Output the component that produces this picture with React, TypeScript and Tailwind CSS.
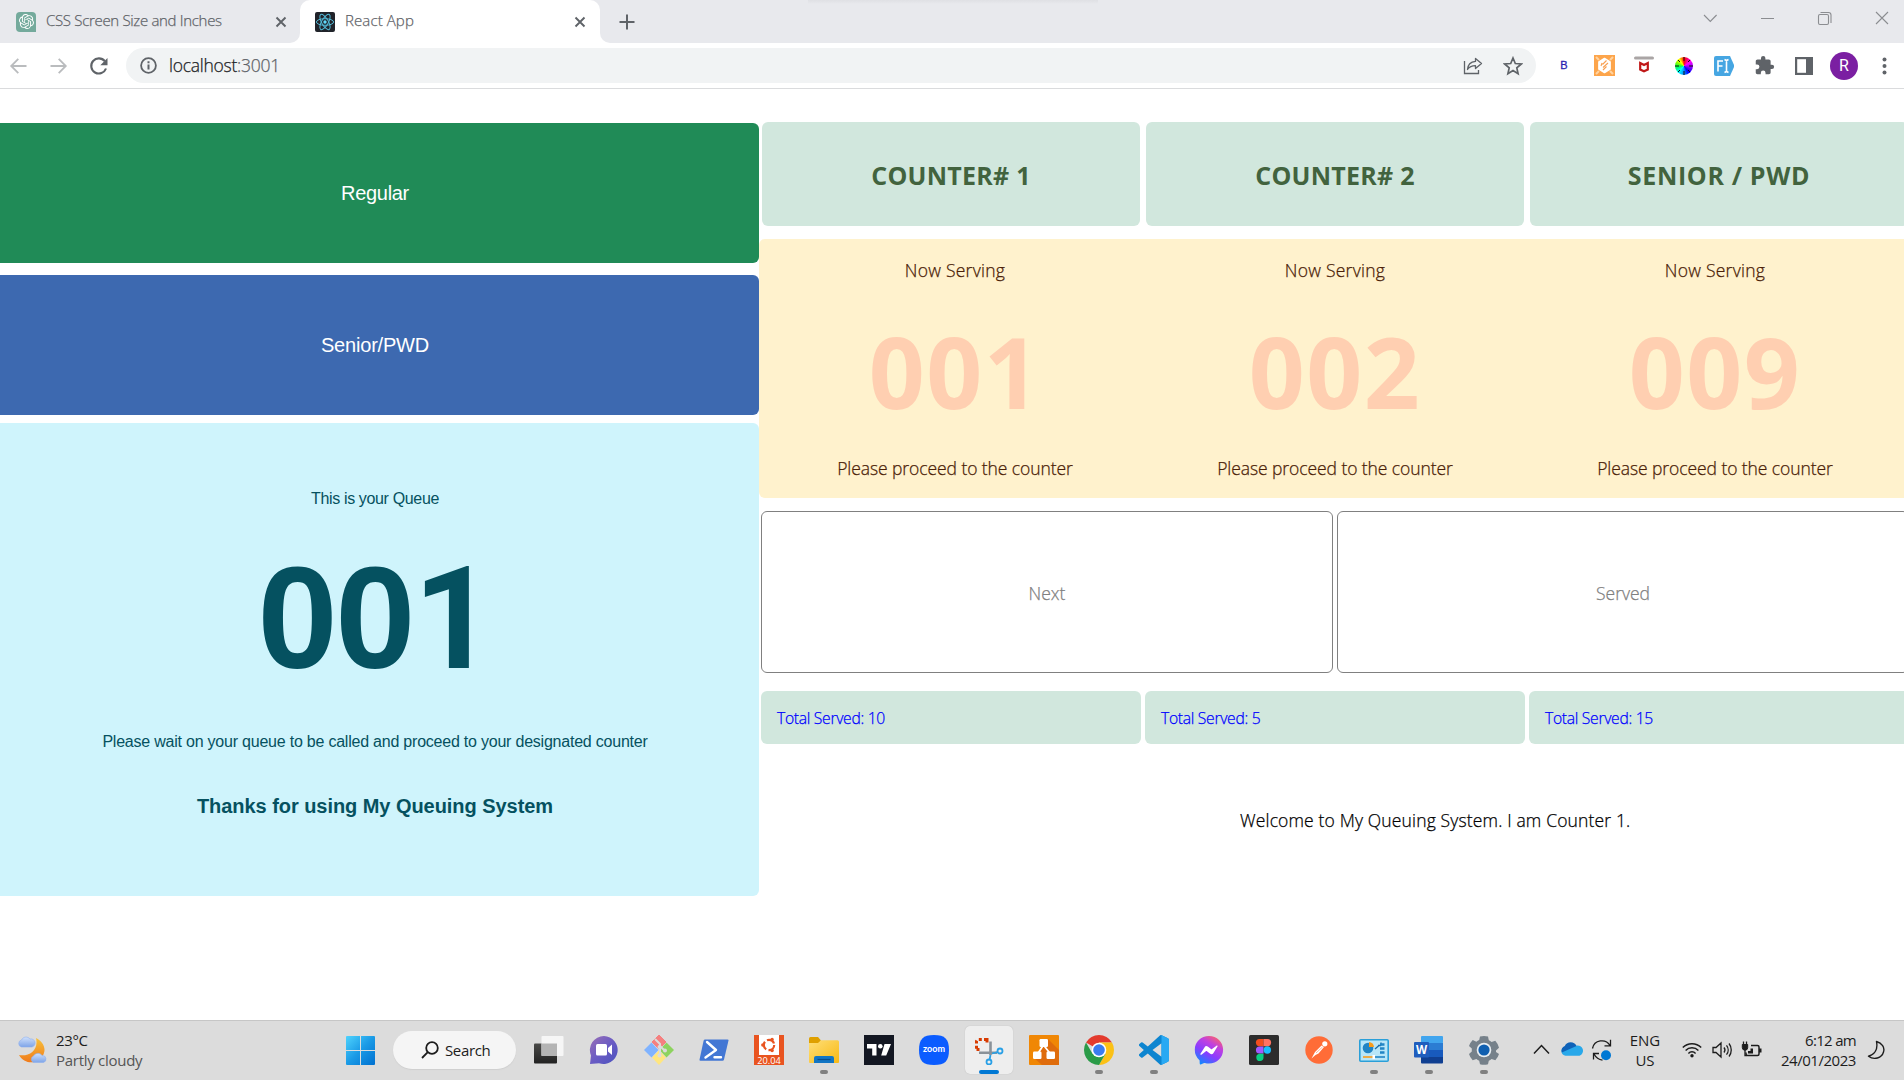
import React from "react";
import { SiOpenai } from "react-icons/si";

type Kids = { children?: React.ReactNode };

const sans = "font-['Open_Sans','Noto_Sans',sans-serif]";
const thin = "font-light [-webkit-text-stroke:0.25px_currentColor]";

/* ---------- Browser chrome ---------- */

function CloseX() {
  return (
    <svg width="12" height="12" viewBox="0 0 12 12" stroke="#5f6368" strokeWidth="1.9">
      <path d="M1.5 1.5l9 9M10.5 1.5l-9 9" />
    </svg>
  );
}

function ReactFavicon() {
  return (
    <svg width="20" height="20" viewBox="0 0 20 20">
      <rect width="20" height="20" rx="2" fill="#20232a" />
      <g fill="none" stroke="#53b9d6" strokeWidth="1">
        <ellipse cx="10" cy="10" rx="8.6" ry="3.3" />
        <ellipse cx="10" cy="10" rx="8.6" ry="3.3" transform="rotate(60 10 10)" />
        <ellipse cx="10" cy="10" rx="8.6" ry="3.3" transform="rotate(120 10 10)" />
      </g>
      <circle cx="10" cy="10" r="1.7" fill="#61dafb" />
    </svg>
  );
}

function TabStrip() {
  return (
    <div className="relative flex h-[43px] items-stretch bg-[#e8e9ed]">
      <div className="absolute left-[808px] top-0 h-[4px] w-[290px] bg-gradient-to-b from-[#dfe0e4] to-[#e8e9ed]" />
      <div className="flex w-[300px] items-center pl-4 pr-[13px]">
        <span className="grid h-5 w-5 place-items-center rounded-[4px] rounded-br-none bg-[#74aa9c] text-white">
          <SiOpenai size={15} />
        </span>
        <span className={`ml-[10px] flex-1 whitespace-nowrap pb-[2px] text-[15px] tracking-[-0.32px] text-[#5f6368] ${thin}`}>
          CSS Screen Size and Inches
        </span>
        <CloseX />
      </div>
      <div className="relative flex w-[300px] items-center rounded-t-[10px] bg-white pl-[15px] pr-[14px]">
        <div className="absolute -left-[10px] bottom-0 h-[10px] w-[10px] bg-white">
          <div className="h-full w-full rounded-br-[10px] bg-[#e8e9ed]" />
        </div>
        <div className="absolute -right-[10px] bottom-0 h-[10px] w-[10px] bg-white">
          <div className="h-full w-full rounded-bl-[10px] bg-[#e8e9ed]" />
        </div>
        <ReactFavicon />
        <span className={`ml-[10px] flex-1 pb-[2px] text-[15px] tracking-[0.1px] text-[#5f6368] ${thin}`}>React App</span>
        <CloseX />
      </div>
      <div className="flex flex-1 items-center justify-between pl-[19px] pr-[15px]">
        <svg width="16" height="16" viewBox="0 0 16 16" stroke="#5f6368" strokeWidth="2">
          <path d="M8 .5v15M.5 8h15" />
        </svg>
        <svg className="-mt-[7px]" width="186" height="16" viewBox="0 0 186 16" fill="none" stroke="#8b8d91" strokeWidth="1.1">
          <path d="M1 5l6.3 6.5L13.6 5M58 8.5h13" />
          <rect x="115.500" y="4.500" width="10" height="10" rx="1.500" />
          <path d="M117.500 2.500h8a2.500 2.500 0 0 1 2.500 2.500v8" />
          <path d="M173 2l12 12M185 2l-12 12" />
        </svg>
      </div>
    </div>
  );
}

function Cell({ children }: Kids) {
  return <span className="grid w-10 place-items-center">{children}</span>;
}

function Toolbar() {
  return (
    <div className="flex h-[46px] items-center border-b border-[#dadbdd] bg-white">
      <svg className="shrink-0" width="126" height="44" viewBox="0 0 126 44" fill="none" strokeWidth="1.8">
        <g stroke="#babcbe">
          <path d="M26.500 22H11.500M18.300 14.800L11.200 22l7.100 7.200" />
          <path d="M50.500 22h15M58.700 14.800L65.800 22l-7.100 7.200" />
        </g>
        <path d="M104.800 17.200A7.600 7.600 0 1 0 106 24.500" stroke="#5f6368" strokeWidth="2.100" />
        <path d="M107.500 14v7.200h-7.200z" fill="#5f6368" />
      </svg>
      <div className="flex h-[35px] w-[1410px] items-center rounded-full bg-[#f1f3f4]">
        <svg className="ml-[14px]" width="17" height="17" viewBox="0 0 17 17" fill="none" stroke="#5f6368" strokeWidth="1.8">
          <circle cx="8.500" cy="8.500" r="7.400" />
          <path d="M8.500 7.500v5M8.500 4.200v2" strokeWidth="2" />
        </svg>
        <span className={`ml-[12px] flex-1 pb-[2px] text-[17.5px] leading-6 tracking-[-0.25px] text-[#5f6368] ${thin}`}>
          <span className="text-[#202124]">localhost</span>:3001
        </span>
        <span className="flex w-[73px] justify-between pr-[13px]">
          <svg width="20" height="20" viewBox="0 0 20 20" fill="none" stroke="#5f6368" strokeWidth="1.300">
            <path d="M1.500 5v12.500h14V14" />
            <path d="M12.500 2.500l6 5-6 5V9.700c-4 0-6.300 1.300-8 3.800.3-4.500 3-7.600 8-8.100z" strokeLinejoin="round" />
          </svg>
          <svg width="20" height="20" viewBox="0 0 20 20" fill="none" stroke="#5f6368" strokeWidth="1.700">
            <path d="M10 2l2.300 5.500 6 .5-4.500 3.900 1.300 5.800L10 14.600l-5.100 3.100 1.300-5.800L1.700 8l6-.5z" />
          </svg>
        </span>
      </div>
      <div className="ml-[8px] flex items-center">
        <Cell>
          <span className="font-['Liberation_Sans',sans-serif] text-[11px] text-[#2a1fb0] [-webkit-text-stroke:0.3px]">B</span>
        </Cell>
        <Cell>
          <svg width="21" height="21" viewBox="0 0 21 21">
            <rect width="21" height="21" fill="#fda54b" />
            <path d="M2 2l3 3M19 2l-3 3M2 19l3-3M19 19l-3-3" stroke="#ffd3a0" strokeWidth="2" />
            <path d="M10.500 3.500l5.600 3.300v7.400l-5.600 3.300L4.900 14.200V6.800z" fill="#fff" stroke="#fff" strokeWidth="1.500" strokeLinejoin="round" />
            <path d="M12.500 5.500l-4 4M14 8l-5 4.500M12.500 11.500L9 15M8 8l-1 3" stroke="#f9a052" strokeWidth="1.100" />
          </svg>
        </Cell>
        <Cell>
          <svg width="20" height="20" viewBox="0 0 20 20">
            <rect y="0.500" width="20" height="3" rx="1.500" fill="#aaa5a5" />
            <path d="M6.200 7l3.800 2 3.800-2v6.500L10 15.300l-3.800-1.800z" fill="none" stroke="#c01818" strokeWidth="2.200" />
          </svg>
        </Cell>
        <Cell>
          <span className="relative grid h-[18px] w-[18px] place-items-center rounded-full bg-[conic-gradient(#f00,#f0f_16%,#80f_28%,#00f_40%,#08f_50%,#0ff_62%,#0f4_74%,#8f0_82%,#ff0_90%,#f80_95%,#f00)]">
            <svg className="absolute" width="20" height="20" viewBox="0 0 20 20" stroke="#111" strokeWidth="1">
              <path d="M10 1v4M10 15v4M1 10h4M15 10h4M4 4l2 2M14 14l2 2M16 4l-2 2M4 16l2-2" />
            </svg>
          </span>
        </Cell>
        <Cell>
          <svg width="20" height="20" viewBox="0 0 20 20">
            <path d="M2 0h14l4 9v2l-4 9H2a2 2 0 0 1-2-2V2a2 2 0 0 1 2-2z" fill="#46a6e2" />
            <path d="M4 15.500V5h5M4 10h4.500M10.500 3.500l2 1 2-1M12.500 4.500v11M10.500 16.500l2-1 2 1" stroke="#fff" strokeWidth="1.600" fill="none" />
          </svg>
        </Cell>
        <Cell>
          <svg width="21" height="21" viewBox="0 0 24 24" fill="#5f6368">
            <path d="M20.500 11H19V7c0-1.100-.9-2-2-2h-4V3.500a2.500 2.500 0 0 0-5 0V5H4c-1.100 0-2 .9-2 2v3.800h1.500a2.700 2.700 0 0 1 0 5.400H2V20c0 1.100.9 2 2 2h3.800v-1.500a2.700 2.700 0 0 1 5.400 0V22H17c1.100 0 2-.9 2-2v-4h1.500a2.500 2.500 0 0 0 0-5z" />
          </svg>
        </Cell>
        <Cell>
          <svg width="18" height="18" viewBox="0 0 18 18">
            <rect x="1.100" y="1.100" width="15.800" height="15.800" fill="none" stroke="#5f6368" strokeWidth="2.200" />
            <rect x="11" y="1" width="6" height="16" fill="#5f6368" />
          </svg>
        </Cell>
        <Cell>
          <span className="grid h-7 w-7 place-items-center rounded-full bg-[#7b1fa2] font-[Roboto,sans-serif] text-[16px] leading-none text-white">R</span>
        </Cell>
        <Cell>
          <svg width="5" height="18" viewBox="0 0 5 18" fill="#5f6368">
            <circle cx="2.500" cy="2.500" r="2" />
            <circle cx="2.500" cy="9" r="2" />
            <circle cx="2.500" cy="15.500" r="2" />
          </svg>
        </Cell>
      </div>
    </div>
  );
}

/* ---------- Queue page ---------- */

const counters = [
  { title: "COUNTER# 1", now: "001", served: 10, tracking: "tracking-[0.25px]" },
  { title: "COUNTER# 2", now: "002", served: 5, tracking: "tracking-[0.25px]" },
  { title: "SENIOR / PWD", now: "009", served: 15, tracking: "tracking-[0.65px]" },
];

function KioskPanel() {
  return (
    <div className="-ml-[9px] mt-[34px] w-[768px] shrink-0 text-center font-['Liberation_Sans',Arial,sans-serif]">
      <button className="block h-[140px] w-full rounded-md bg-[#208b57] text-[20px] tracking-[-0.3px] text-white">Regular</button>
      <button className="mt-3 block h-[140px] w-full rounded-md bg-[#3d69b0] text-[20px] tracking-[-0.2px] text-white">Senior/PWD</button>
      <div className="mt-2 h-[473px] rounded-md bg-[#cff4fc] pt-16 text-[#055160]">
        <p className="text-[16px] leading-6 tracking-[-0.35px]">This is your Queue</p>
        <p className="mt-[24px] h-[169px] text-[144px] font-bold leading-[168px] tracking-[-2.2px]">
          00<span className="font-[Roboto,sans-serif] text-[142px]">1</span>
        </p>
        <p className="mt-[26px] text-[16px] leading-6 tracking-[-0.22px]">
          Please wait on your queue to be called and proceed to your designated counter
        </p>
        <p className="mt-[40px] text-[20px] font-bold leading-6 tracking-[-0.05px]">Thanks for using My Queuing System</p>
      </div>
    </div>
  );
}

function CounterPanel() {
  return (
    <div className="mt-[33px] flex-1 overflow-hidden">
      <div className="ml-[3px] flex gap-[6px]">
        {counters.map((c) => (
          <div
            key={c.title}
            className={`flex h-[104px] w-[378px] shrink-0 items-center justify-center rounded-md bg-[#d1e7dd] pt-[4px] text-[25px] font-bold text-[#42633e] ${c.tracking}`}
          >
            {c.title}
          </div>
        ))}
      </div>
      <div className="mt-[13px] flex h-[259px] rounded-l-md bg-[#fff2cd] pl-[6px] text-center text-[17.5px] text-[#4a2006]">
        {counters.map((c) => (
          <div key={c.title} className="w-[380px] shrink-0 pt-[19px]">
            <p className={`leading-6 tracking-[0.26px] ${thin}`}>Now Serving</p>
            <p className="mt-[29px] text-[98px] font-bold leading-[120px] tracking-[1.5px] text-[#ffcfb1]">{c.now}</p>
            <p className={`mt-[25px] leading-6 tracking-[-0.075px] ${thin}`}>Please proceed to the counter</p>
          </div>
        ))}
      </div>
      <div className="ml-[2px] mt-[13px] flex gap-1">
        {["Next", "Served"].map((label) => (
          <button
            key={label}
            className={`h-[162px] w-[572px] shrink-0 rounded-md border border-[#808080] pt-[2px] text-[17.5px] text-[#808080] ${thin}`}
          >
            {label}
          </button>
        ))}
      </div>
      <div className="ml-[2px] mt-[18px] flex gap-1">
        {counters.map((c) => (
          <div
            key={c.title}
            className={`flex h-[53px] w-[380px] shrink-0 items-center rounded-md bg-[#d1e7dd] pl-4 pt-[2px] text-[15.7px] tracking-[-0.3px] text-[#0000ff] ${thin}`}
          >
            Total Served: {c.served}
          </div>
        ))}
      </div>
      <p className={`ml-[481px] mt-16 whitespace-nowrap text-[17.5px] leading-6 tracking-[0.15px] text-black ${thin}`}>
        Welcome to My Queuing System. I am Counter 1.
      </p>
    </div>
  );
}

/* ---------- Taskbar ---------- */

function WeatherIcon() {
  return (
    <svg width="30" height="30" viewBox="0 0 30 30">
      <defs>
        <linearGradient id="moon" x1="0" y1="0" x2="0" y2="1">
          <stop offset="0" stopColor="#f7c23c" />
          <stop offset="1" stopColor="#f07a1a" />
        </linearGradient>
        <linearGradient id="cloud" x1="0" y1="0" x2="0" y2="1">
          <stop offset="0" stopColor="#cfe0fb" />
          <stop offset="1" stopColor="#7ea4e8" />
        </linearGradient>
      </defs>
      <path d="M19 3c6 3 10 9 8 15-3 11-19 13-25 2 10 2 20-5 17-17z" fill="url(#moon)" />
      <path d="M4.500 12a3.600 3.600 0 0 1 0-7A5 5 0 0 1 13 4a4 4 0 0 1 2 8z" fill="url(#cloud)" stroke="#8fb0ee" strokeWidth=".6" />
      <path d="M16.500 27.500a3.500 3.500 0 0 1 0-6.500 5 5 0 0 1 8.500-.500 3.600 3.600 0 0 1 1.500 7z" fill="url(#cloud)" stroke="#8fb0ee" strokeWidth=".6" />
    </svg>
  );
}

function WindowsLogo() {
  return (
    <svg width="29" height="29" viewBox="0 0 29 29">
      <defs>
        <linearGradient id="win" x1="0" y1="0" x2="29" y2="29" gradientUnits="userSpaceOnUse">
          <stop offset="0" stopColor="#4fd3fd" />
          <stop offset=".5" stopColor="#1a9ae6" />
          <stop offset="1" stopColor="#0070d0" />
        </linearGradient>
      </defs>
      <path
        fill="url(#win)"
        d="M1 0h13v14H0V1a1 1 0 0 1 1-1zM15 0h13a1 1 0 0 1 1 1v13H15zM0 15h14v14H1a1 1 0 0 1-1-1zM15 15h14v13a1 1 0 0 1-1 1H15z"
      />
    </svg>
  );
}

function Icon({ children }: Kids) {
  return (
    <svg width="30" height="30" viewBox="0 0 30 30">
      {children}
    </svg>
  );
}

const TaskView = () => (
  <Icon>
    <defs>
      <linearGradient id="tvb" x1="0" y1="0" x2="0" y2="1">
        <stop offset="0" stopColor="#4a4a48" />
        <stop offset="1" stopColor="#222" />
      </linearGradient>
    </defs>
    <rect x="0" y="8.500" width="23" height="20" rx="1" fill="url(#tvb)" />
    <rect x="7.500" y="1" width="22" height="20" rx="1" fill="#f6f6f6" />
    <rect x="7.500" y="8.500" width="15.500" height="12.500" fill="#b4b4b4" />
  </Icon>
);

const VideoChat = () => (
  <Icon>
    <defs>
      <linearGradient id="vc" x1="0" y1="0" x2="1" y2="1">
        <stop offset="0" stopColor="#9a6fb5" />
        <stop offset=".5" stopColor="#6b5cc4" />
        <stop offset="1" stopColor="#4a52bf" />
      </linearGradient>
    </defs>
    <path d="M15 1a14 14 0 1 1-5 27.200L1 29l1-8.500A14 14 0 0 1 15 1z" fill="url(#vc)" />
    <rect x="7" y="9" width="11" height="11.500" rx="1.500" fill="#fff" />
    <path d="M19 13l4-3.500v10.500l-4-3.500z" fill="#fff" />
  </Icon>
);

const GitIcon = () => (
  <Icon>
    <path d="M15 0l7 7-7 7-7-7z" fill="#f58080" stroke="#f58080" strokeLinejoin="round" />
    <path d="M7.500 7.500l7 7.500-7 7.500L0 15z" fill="#80b3ff" />
    <path d="M22.500 7.500L30 15l-7.500 7.500L15.500 15z" fill="#8dd35f" />
    <path d="M15 15.500l7 7L15 30l-7-7.500z" fill="#ffe680" />
    <path d="M11 4l5 5v11M16 11l5 5" stroke="#dcdcdc" strokeWidth="2" fill="none" />
    <circle cx="15.500" cy="12" r="2" fill="#dcdcdc" />
    <circle cx="21" cy="15.500" r="2" fill="#dcdcdc" />
    <circle cx="15.500" cy="20.500" r="2" fill="#dcdcdc" />
  </Icon>
);

const PowerShell = () => (
  <Icon>
    <path d="M6 4.500h22.500q1.200 0 1 1L25 24.500q-.300 1.200-1.500 1.200H1.500q-1.200 0-1-1L4.600 5.700Q4.900 4.500 6 4.500z" fill="#4377d4" />
    <path d="M8 7l9 8-10.500 7.500M15.500 22.300H22" stroke="#fff" strokeWidth="2.400" fill="none" strokeLinecap="round" strokeLinejoin="round" />
  </Icon>
);

const Ubuntu = () => (
  <Icon>
    <rect width="30" height="30" fill="#e95420" />
    <rect x="5" y="0" width="20" height="20" fill="#fff" />
    <circle cx="15" cy="10" r="5.200" fill="none" stroke="#e95420" strokeWidth="2.200" strokeDasharray="8.500 2.400" />
    <circle cx="8.800" cy="10" r="1.700" fill="#e95420" />
    <circle cx="18.100" cy="4.400" r="1.700" fill="#e95420" />
    <circle cx="18.100" cy="15.600" r="1.700" fill="#e95420" />
    <text x="15" y="28.800" textAnchor="middle" fontSize="9.500" fill="#fff" fontFamily="Open Sans, sans-serif" textLength="23.500" lengthAdjust="spacingAndGlyphs">20.04</text>
  </Icon>
);

const Explorer = () => (
  <Icon>
    <defs>
      <linearGradient id="fold" x1="0" y1="0" x2="1" y2="1">
        <stop offset="0" stopColor="#ffdf78" />
        <stop offset="1" stopColor="#f8b914" />
      </linearGradient>
    </defs>
    <path d="M0 3.500q0-1.500 1.500-1.500H9l3 3.500V12H0z" fill="#dfa000" />
    <path d="M0 8h9l3-2.800h16.500q1.500 0 1.500 1.500V27q0 1-1 1H1q-1 0-1-1z" fill="url(#fold)" />
    <path d="M5 28v-5q0-2 2-2h16q2 0 2 2v5z" fill="#1376c4" />
    <path d="M8.500 24.500h13" stroke="#0a4e8c" strokeWidth="1.200" />
  </Icon>
);

const TradingView = () => (
  <Icon>
    <rect width="30" height="30" fill="#131722" />
    <path d="M3 9h9.500v11.500H8.200v-7H3zM20.500 9H27l-4.800 11.500h-5z" fill="#fff" />
    <circle cx="16.300" cy="11.300" r="2.300" fill="#fff" />
  </Icon>
);

const Zoom = () => (
  <Icon>
    <path d="M15 0c11 0 15 4 15 15s-4 15-15 15S0 26 0 15 4 0 15 0z" fill="#0b5cff" />
    <text x="15" y="17.300" textAnchor="middle" fontSize="8.500" fontWeight="700" fill="#fff" fontFamily="Lato, sans-serif" textLength="22" lengthAdjust="spacingAndGlyphs">zoom</text>
  </Icon>
);

const Snip = () => (
  <Icon>
    <path d="M13 4.500H4.500a2 2 0 0 0-2 2V15" fill="none" stroke="#d83b01" strokeWidth="3" strokeDasharray="3 2.200" />
    <path d="M2.500 14.500h3M13 3v4.500" stroke="#d83b01" strokeWidth="3" />
    <path d="M16.500 6.500V20M5 17.800h18" stroke="#8a9299" strokeWidth="2.600" />
    <circle cx="26" cy="16" r="2.500" fill="none" stroke="#2aa0e6" strokeWidth="1.800" />
    <circle cx="15" cy="27" r="2.500" fill="none" stroke="#2aa0e6" strokeWidth="1.800" />
    <path d="M18 18.500l6-1.500M16.500 20l-1 5" stroke="#2aa0e6" strokeWidth="1.800" />
  </Icon>
);

const DrawIo = () => (
  <Icon>
    <rect width="30" height="30" rx="1" fill="#f08705" />
    <path d="M19 4l11 11v15H13l-8-7 8-11z" fill="#df6c0c" />
    <path d="M14.500 10L8.500 19M14.500 10l7 9" stroke="#fff" strokeWidth="1.800" />
    <rect x="10.500" y="4" width="8.500" height="8" rx="1.200" fill="#fff" />
    <rect x="4" y="16.500" width="8.500" height="7.500" rx="1.200" fill="#fff" />
    <rect x="17.500" y="16.500" width="8.500" height="7.500" rx="1.200" fill="#fff" />
  </Icon>
);

const Chrome = () => (
  <Icon>
    <path d="M15 15L2.010 7.500A15 15 0 0 1 27.990 7.500H15z" fill="#e33b2e" />
    <path d="M15 7.500h12.990A15 15 0 0 1 15 30l6.500-11.250z" fill="#fbc116" />
    <path d="M2.010 7.500A15 15 0 0 0 15 30l6.500-11.250L15 15l-6.500 3.750z" fill="#2a9b48" />
    <circle cx="15" cy="15" r="7.300" fill="#fff" />
    <circle cx="15" cy="15" r="5.800" fill="#3a7cf0" />
  </Icon>
);

const VsCode = () => (
  <Icon>
    <g transform="scale(1.25)">
      <path
        fill="#0d85d0"
        d="M23.150 2.587L18.210.210a1.494 1.494 0 0 0-1.705.290l-9.460 8.630-4.120-3.128a.999.999 0 0 0-1.276.057L.327 7.261A1 1 0 0 0 .326 8.740L3.899 12 .326 15.260a1 1 0 0 0 .001 1.479L1.650 17.940a.999.999 0 0 0 1.276.057l4.120-3.128 9.460 8.630a1.492 1.492 0 0 0 1.704.290l4.942-2.377A1.500 1.500 0 0 0 24 20.060V3.939a1.500 1.500 0 0 0-.850-1.352zm-5.146 14.861L10.826 12l7.178-5.448v10.896z"
      />
      <path fill="#29a9f3" d="M18 .2l5.150 2.387A1.500 1.500 0 0 1 24 3.940V20.060a1.500 1.500 0 0 1-.850 1.352L18 23.800z" />
    </g>
  </Icon>
);

const Messenger = () => (
  <Icon>
    <defs>
      <linearGradient id="msg" x1=".2" y1="1" x2=".8" y2="0">
        <stop offset="0" stopColor="#0a8cff" />
        <stop offset=".4" stopColor="#8a3cff" />
        <stop offset=".7" stopColor="#c040e0" />
        <stop offset="1" stopColor="#ff6464" />
      </linearGradient>
    </defs>
    <g transform="translate(.8 1) scale(1.18)">
      <path d="M4 7h16v10H4z" fill="#fff" />
      <path
        fill="url(#msg)"
        d="M.001 11.639C.001 4.949 5.241 0 12.001 0S24 4.950 24 11.639c0 6.689-5.240 11.638-12 11.638-1.210 0-2.380-.160-3.470-.460a.960.960 0 0 0-.640.050l-2.390 1.050a.960.960 0 0 1-1.350-.850l-.070-2.140a.970.970 0 0 0-.320-.680A11.390 11.389 0 0 1 .002 11.640zm8.320-2.190l-3.520 5.600c-.350.530.320 1.139.820.750l3.790-2.870c.260-.200.600-.200.870 0l2.800 2.100c.840.630 2.040.400 2.600-.480l3.520-5.600c.350-.530-.320-1.130-.820-.750l-3.790 2.870c-.250.200-.600.200-.860 0l-2.800-2.100a1.800 1.800 0 0 0-2.610.480z"
      />
    </g>
  </Icon>
);

const Figma = () => (
  <Icon>
    <rect width="30" height="30" rx="1.500" fill="#2c2c2c" />
    <path d="M14.500 4h-4a3.600 3.600 0 0 0 0 7.200h4z" fill="#f24e1e" />
    <path d="M14.500 4h4a3.600 3.600 0 0 1 0 7.200h-4z" fill="#ff7262" />
    <path d="M14.500 11.400h-4a3.600 3.600 0 0 0 0 7.200h4z" fill="#a259ff" />
    <circle cx="18.300" cy="15" r="3.700" fill="#1abcfe" />
    <path d="M14.500 18.800h-4a3.600 3.600 0 1 0 4 3.600z" fill="#0acf83" />
  </Icon>
);

const Postman = () => (
  <Icon>
    <circle cx="15" cy="15" r="13.700" fill="#ff6c37" />
    <path d="M7.500 23.500l3.500-6.500 6.500-6.500 2.500 1.500-5.500 6.500-3 1.500z" fill="#fff" />
    <circle cx="20.800" cy="8.800" r="2.600" fill="#fff" />
    <path d="M12 18l6.500-6" stroke="#ff9c78" strokeWidth=".8" />
  </Icon>
);

const ControlPanel = () => (
  <Icon>
    <rect x=".8" y="4.800" width="28.400" height="21.400" rx="1" fill="#b8e6f8" stroke="#2b9fd8" strokeWidth="1.600" />
    <circle cx="9" cy="13" r="5.300" fill="#2185c5" />
    <path d="M10 12V7a5.200 5.200 0 0 1 5 5z" fill="#f89c1c" />
    <path d="M16 14l4-3.500M19 10.500h3M22 7.500v3" stroke="#1b6ba8" strokeWidth="1.300" />
    <path d="M21 9.500h4.500M21 13.500h4.500M21 17.500h4.500" stroke="#2185c5" strokeWidth="2.400" />
    <path d="M4 22h12" stroke="#f89c1c" strokeWidth="1.600" />
    <path d="M16 22h10" stroke="#2185c5" strokeWidth="1.600" />
    <rect x="13.500" y="20" width="2.500" height="4" fill="#fff" />
  </Icon>
);

const Word = () => (
  <Icon>
    <rect x="7" y="1" width="22" height="7.200" rx="1" fill="#41a5ee" />
    <rect x="7" y="8" width="22" height="7" fill="#2b7cd3" />
    <rect x="7" y="15" width="22" height="7" fill="#185abd" />
    <path d="M7 22h22v5.500a1 1 0 0 1-1 1H8a1 1 0 0 1-1-1z" fill="#103f91" />
    <rect x="0" y="7" width="15" height="15.500" rx="1" fill="#1f5dbd" />
    <text x="7.500" y="18.800" textAnchor="middle" fontSize="11.500" fontWeight="700" fill="#fff" fontFamily="Open Sans, sans-serif">W</text>
  </Icon>
);

const Settings = () => (
  <Icon>
    <path
      d="M11 1.500q4-1.200 8 0l.8 3.800q1.500.700 2.800 1.700l3.700-1.200q2.800 3 3.700 7L27 15.400v1.500L30 19q-1 3.500-3.700 6.200l-3.700-1.200q-1.300 1-2.800 1.700l-.8 3.600q-4 1-8 0l-.8-3.600q-1.500-.7-2.800-1.700l-3.700 1.200Q1 22.500 0 19l2.800-2.400v-3L0 11q1-3.300 3.700-6l3.700 1.800q1.300-1 2.800-1.700z"
      fill="#76818a"
    />
    <circle cx="15" cy="15" r="7.300" fill="#e8eef2" />
    <circle cx="15" cy="15" r="5.600" fill="#0f5fb0" />
  </Icon>
);

const apps: { name: string; Glyph: () => React.ReactElement; state?: "open" | "active" }[] = [
  { name: "taskview", Glyph: TaskView },
  { name: "chat", Glyph: VideoChat },
  { name: "git", Glyph: GitIcon },
  { name: "powershell", Glyph: PowerShell },
  { name: "ubuntu", Glyph: Ubuntu },
  { name: "explorer", Glyph: Explorer, state: "open" },
  { name: "tradingview", Glyph: TradingView },
  { name: "zoom", Glyph: Zoom },
  { name: "snip", Glyph: Snip, state: "active" },
  { name: "drawio", Glyph: DrawIo },
  { name: "chrome", Glyph: Chrome, state: "open" },
  { name: "vscode", Glyph: VsCode, state: "open" },
  { name: "messenger", Glyph: Messenger },
  { name: "figma", Glyph: Figma },
  { name: "postman", Glyph: Postman },
  { name: "control", Glyph: ControlPanel, state: "open" },
  { name: "word", Glyph: Word, state: "open" },
  { name: "settings", Glyph: Settings, state: "open" },
];

function TrayIcons() {
  return (
    <svg width="80" height="24" viewBox="0 0 80 24" fill="none" stroke="#1c1c1c" strokeWidth="1.500">
      <path d="M1 15.500l7.500-8 7.500 8" />
      <path d="M32.500 17.800a4.500 4.500 0 0 1-1.500-8.500l12-1.500a5 5 0 0 1 3.500 10z" fill="#28a8ea" stroke="none" />
      <path d="M28.800 14.500a5 5 0 0 1 3-6.500A6.500 6.500 0 0 1 43.500 8z" fill="#0f62b8" stroke="none" />
      <path d="M59.500 10.500a9.500 9.500 0 0 1 17.500-3M77.500 1.800v6h-6M61 16q3 5.500 8.500 6.200M60.500 21.500v-6h5.500" strokeWidth="1.300" />
      <circle cx="73" cy="17.300" r="5" fill="#0078d4" stroke="none" />
    </svg>
  );
}

function StatusIcons() {
  return (
    <svg width="80" height="20" viewBox="0 0 80 20" fill="none" stroke="#1c1c1c" strokeWidth="1.500">
      <path d="M.800 7.500a13 13 0 0 1 18.400 0M3.600 10.500a9 9 0 0 1 12.800 0M6.400 13.400a5 5 0 0 1 7.200 0" />
      <circle cx="10" cy="15.700" r="1.700" fill="#1c1c1c" stroke="none" />
      <path d="M31 7.500h3l5-4.500v14l-5-4.500h-3zM42 7.500a4 4 0 0 1 0 5M44.500 5.300a7.500 7.500 0 0 1 0 9.400M47 3.500a10.500 10.500 0 0 1 0 13" strokeWidth="1.300" />
      <path d="M69 5.500h6.500q1.500 0 1.500 1.500v7q0 1.500-1.500 1.500h-10q-1.500 0-1.500-1.500v-1.500" />
      <path d="M66 13.500v-2.500h2.500V8.500h2.500v5z" fill="#1c1c1c" stroke="none" />
      <path d="M77 8.500h2.500v4H77z" fill="#1c1c1c" stroke="none" />
      <path d="M61.500 1.500v3M64.500 1.500v3M63 9v6.500h2" strokeWidth="1.300" />
      <path d="M60.300 4.500h5.400v3a2.700 2.700 0 0 1-5.400 0z" fill="#1c1c1c" strokeWidth="1" />
    </svg>
  );
}

function Taskbar() {
  return (
    <div className="flex h-[60px] items-center border-t border-[#c6c6c6] bg-[#dcdcdc] pb-px text-[15px] leading-5 text-[#1c1c1c]">
      <div className="flex w-[346px] items-center pl-[17px]">
        <WeatherIcon />
        <div className="-mt-px ml-[9px]">
          <div className="tracking-[-0.36px]">23°C</div>
          <div className="tracking-[-0.28px] text-[#555]">Partly cloudy</div>
        </div>
      </div>
      <WindowsLogo />
      <div className="ml-[18px] flex h-[38px] w-[123px] items-center rounded-full bg-[#f5f5f5] pl-[28px] shadow-[0_1px_1px_#cfcfcf]">
        <svg width="18" height="18" viewBox="0 0 18 18" fill="none" stroke="#1c1c1c" strokeWidth="1.800">
          <circle cx="11" cy="7" r="5.800" />
          <path d="M6.800 11.200L1 17" />
        </svg>
        <span className="-mt-px ml-[6px] tracking-[-0.36px]">Search</span>
      </div>
      <div className="ml-[5px] flex">
        {apps.map(({ name, Glyph, state }) => (
          <div key={name} className="flex w-[55px] justify-center">
            <div
              className={
                state === "active"
                  ? "relative grid h-12 w-12 place-items-center rounded-[5px] bg-[#eeeeee] shadow-[0_0_1px_#b0b0b0]"
                  : "relative grid h-12 w-12 place-items-center"
              }
            >
              <Glyph />
              {state === "open" && <span className="absolute bottom-0 left-5 h-1 w-2 rounded-full bg-[#808080]" />}
              {state === "active" && <span className="absolute bottom-0 left-[14px] h-1 w-5 rounded-full bg-[#0078d4]" />}
            </div>
          </div>
        ))}
      </div>
      <div className="ml-[22px] flex flex-1 items-center">
        <TrayIcons />
        <div className="-mt-px ml-[13px] w-[38px] text-center tracking-[-0.06px]">
          <div>ENG</div>
          <div>US</div>
        </div>
        <div className="ml-[18px]">
          <StatusIcons />
        </div>
        <div className="-mt-px ml-[18px] w-[76px] whitespace-nowrap text-right">
          <div className="tracking-[-0.7px]">6:12 am</div>
          <div className="tracking-[-0.45px]">24/01/2023</div>
        </div>
        <svg className="ml-[11px]" width="19" height="20" viewBox="0 0 19 20" fill="none" stroke="#1c1c1c" strokeWidth="1.400">
          <path d="M9.500 1.500C15 3 18 7.500 16.500 12c-1.700 6-9.500 8.500-15 4.200 6.500-1.700 9.500-7.200 8-14.700z" strokeLinejoin="round" />
        </svg>
      </div>
    </div>
  );
}

export default function App() {
  return (
    <div className={`flex h-[1080px] w-[1904px] flex-col overflow-hidden bg-white ${sans}`}>
      <TabStrip />
      <Toolbar />
      <div className="flex flex-1 overflow-hidden">
        <KioskPanel />
        <CounterPanel />
      </div>
      <Taskbar />
    </div>
  );
}
